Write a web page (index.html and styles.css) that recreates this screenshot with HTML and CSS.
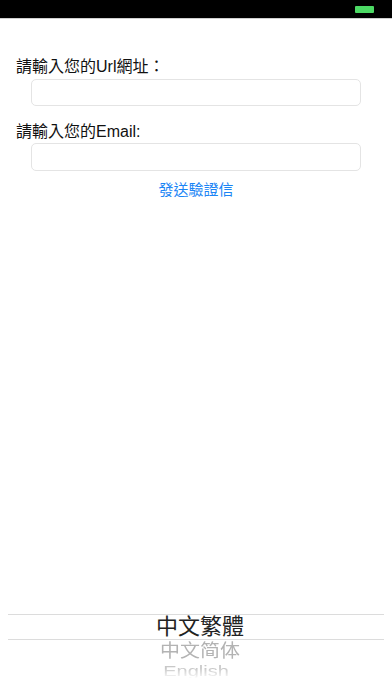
FILE: index.html
```html
<!DOCTYPE html>
<html lang="zh-Hant">
<head>
<meta charset="utf-8">
<title>驗證</title>
<link rel="stylesheet" href="styles.css">
</head>
<body>
<div class="page">
  <div class="statusbar">
    <span class="battery"></span>
  </div>
  <div class="form">
    <div class="label label-first">請輸入您的Url網址：</div>
    <div class="field field-url"></div>
    <div class="label label-second">請輸入您的Email:</div>
    <div class="field field-email"></div>
    <div class="action">發送驗證信</div>
  </div>
  <div class="picker">
    <div class="row selected">中文繁體</div>
    <div class="row next">中文简体</div>
    <div class="row last">English</div>
  </div>
</div>
</body>
</html>
```
FILE: styles.css
```css
html, body {
  margin: 0;
  padding: 0;
  background: #ffffff;
}
body {
  font-family: "Liberation Sans", "Noto Sans CJK TC", sans-serif;
  color: #000;
}
.page {
  width: 392px;
  height: 696px;
  display: flex;
  flex-direction: column;
  overflow: hidden;
}
.statusbar {
  height: 18px;
  background: #000;
  border-bottom: 1px solid #cfcfcf;
  display: flex;
  justify-content: flex-end;
  align-items: flex-start;
  padding-right: 18px;
  flex-shrink: 0;
}
.battery {
  width: 19px;
  height: 7px;
  margin-top: 6px;
  background: #4cd964;
  border-radius: 1px;
}
.form {
  display: flex;
  flex-direction: column;
  padding: 0 31px 0 16px;
}
.label {
  font-size: 16px;
  line-height: 20px;
  height: 20px;
  white-space: nowrap;
  color: #111;
}
.label-first {
  margin-top: 38px;
}
.label-second {
  margin-top: 16px;
}
.field {
  margin-left: 15px;
  box-sizing: border-box;
  border: 1px solid #e4e4e4;
  border-radius: 5px;
  background: #fff;
}
.field-url {
  margin-top: 2px;
  height: 27px;
}
.field-email {
  margin-top: 1px;
  height: 28px;
}
.action {
  margin-top: 10px;
  margin-left: 15px;
  text-align: center;
  font-size: 15px;
  line-height: 18px;
  color: #1a84f5;
}
.picker {
  margin: auto 8px 0;
  height: 82px;
  display: flex;
  flex-direction: column;
  align-items: stretch;
}
.row {
  text-align: center;
  white-space: nowrap;
}
.selected {
  border-top: 1px solid #dcdcdc;
  border-bottom: 1px solid #dcdcdc;
  height: 24px;
  line-height: 24px;
  font-size: 22px;
  color: #222;
  padding-left: 8px;
}
.next {
  height: 22px;
  line-height: 22px;
  font-size: 20px;
  color: #b3b3b3;
  transform: scaleY(0.92);
  padding-left: 8px;
}
.last {
  height: 18px;
  line-height: 18px;
  font-size: 20px;
  color: #c8c8c8;
  transform: scaleY(0.75);
  -webkit-mask-image: linear-gradient(to bottom, rgba(0,0,0,1) 30%, rgba(0,0,0,0.15) 100%);
  mask-image: linear-gradient(to bottom, rgba(0,0,0,1) 30%, rgba(0,0,0,0.15) 100%);
}
```
